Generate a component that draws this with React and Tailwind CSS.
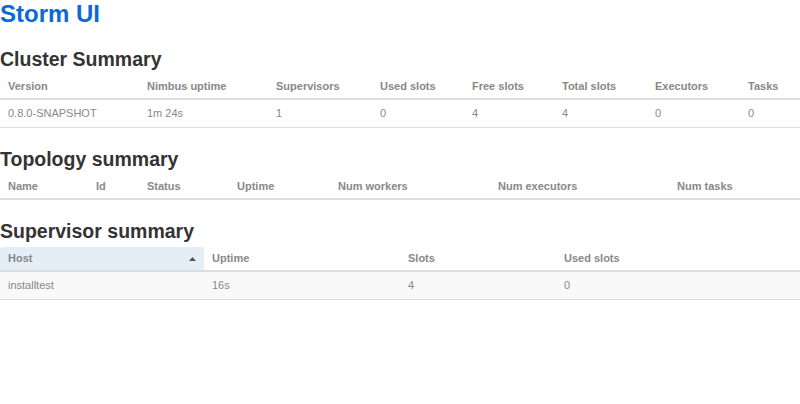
const cluster = {
  widths: [139, 129, 104, 92, 90, 93, 93, 60],
  head: ['Version', 'Nimbus uptime', 'Supervisors', 'Used slots', 'Free slots', 'Total slots', 'Executors', 'Tasks'],
  rows: [['0.8.0-SNAPSHOT', '1m 24s', '1', '0', '4', '4', '0', '0']]
};

const topology = {
  widths: [88, 51, 90, 101, 160, 179, 131],
  head: ['Name', 'Id', 'Status', 'Uptime', 'Num workers', 'Num executors', 'Num tasks'],
  rows: []
};

const supervisors = {
  widths: [204, 196, 156, 244],
  head: ['Host', 'Uptime', 'Slots', 'Used slots'],
  rows: [['installtest', '16s', '4', '0']],
  sorted: 0,
  striped: true
};

function SortUp() {
  return (
    <svg width="7" height="4" viewBox="0 0 7 4" className="absolute right-[8px] top-[10px]">
      <path d="M0 4 L3.5 0 L7 4 Z" fill="#555" />
    </svg>
  );
}

function Summary({ title, table }) {
  return (
    <section>
      <h2 className="mt-[19px] mb-[4px] text-[19.5px] font-bold leading-[24px] text-[#333]">{title}</h2>
      <table className="w-full table-fixed border-collapse">
        <colgroup>
          {table.widths.map((w, i) => (
            <col key={i} style={{ width: w }} />
          ))}
        </colgroup>
        <thead>
          <tr className="border-b-2 border-[#ddd]">
            {table.head.map((h, i) => (
              <th
                key={h}
                className={
                  i === table.sorted
                    ? 'relative rounded-t-[3px] bg-[#e3eef6] px-[8px] py-[4px] text-left text-[11px] font-bold leading-[15px] text-[#888]'
                    : 'px-[8px] py-[4px] text-left text-[11px] font-bold leading-[15px] text-[#888]'
                }
              >
                {h}
                {i === table.sorted ? <SortUp /> : null}
              </th>
            ))}
          </tr>
        </thead>
        <tbody>
          {table.rows.map((r, ri) => (
            <tr key={ri} className={table.striped ? 'border-b border-[#ddd] bg-[#f9f9f9]' : 'border-b border-[#ddd]'}>
              {r.map((c, ci) => (
                <td key={ci} className="px-[8px] py-[6px] text-[11px] leading-[15px] text-[#888]">
                  {c}
                </td>
              ))}
            </tr>
          ))}
        </tbody>
      </table>
    </section>
  );
}

export default function App() {
  return (
    <div className="h-[404px] w-[800px] bg-white font-['Liberation_Sans',Arial,sans-serif]">
      <h1 className="text-[24px] font-bold leading-[28px] text-[#0c68d6]">Storm UI</h1>
      <div className="mt-[3px]">
        <Summary title="Cluster Summary" table={cluster} />
        <Summary title="Topology summary" table={topology} />
        <Summary title="Supervisor summary" table={supervisors} />
      </div>
    </div>
  );
}
